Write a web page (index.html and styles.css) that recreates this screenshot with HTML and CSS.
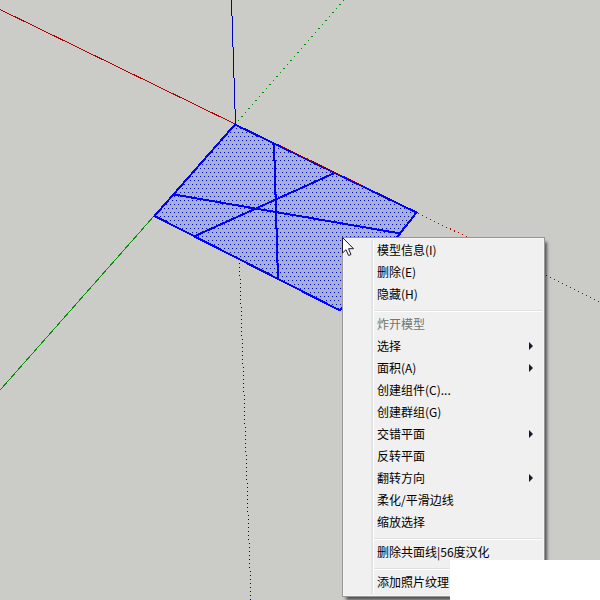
FILE: index.html
```html
<!DOCTYPE html>
<html lang="zh-CN">
<head>
<meta charset="utf-8">
<title>模型</title>
<link rel="stylesheet" href="styles.css">
</head>
<body>
<main class="viewport">
<svg class="scene" viewBox="0 0 600 600" shape-rendering="crispEdges">
  <defs>
    <pattern id="dots" x="0" y="0" width="8" height="8" patternUnits="userSpaceOnUse">
      <rect width="8" height="8" fill="#a8b4c0"/>
      <path d="M0 0h1v1h-1zM4 0h1v1h-1zM2 4h1v1h-1zM6 4h1v1h-1z" fill="#00f"/>
    </pattern>
  </defs>
  <path class="axis red" d="M0 9.5L235 124"/>
  <path class="axis blue" d="M231.5 0L235.5 124"/>
  <path class="axis green" d="M154 216L0 390.2"/>
  <path class="axis green dotted-green" d="M238.2 120.8L343.8 0"/>
  <path class="axis navy dotted-down" d="M239.5 263L251 600"/>
  <path class="axis red dotted-red" d="M418 213.3L470 238.5"/>
  <path class="axis dark dotted-red" d="M546 275.4L600 301.8"/>
  <path d="M235 124L416 212L340 310L154 216Z" fill="url(#dots)"/>
  <path class="edge" d="M235 124.5L416.5 212.5L340 310.5L154.5 216Z"/>
  <path class="edge" d="M174 194.5L400.5 233.5M334.5 173L195 236M274 143L278 279"/>
  <path class="axis red overlay" d="M282 146.6L364 186.6"/>
</svg>
<nav class="menu">
  <ul class="items">
    <li>模型信息(I)</li>
    <li>删除(E)</li>
    <li>隐藏(H)</li>
    <li class="separator"></li>
    <li class="disabled">炸开模型</li>
    <li class="sub">选择</li>
    <li class="sub">面积(A)</li>
    <li>创建组件(C)...</li>
    <li>创建群组(G)</li>
    <li class="sub">交错平面</li>
    <li>反转平面</li>
    <li class="sub">翻转方向</li>
    <li>柔化/平滑边线</li>
    <li>缩放选择</li>
    <li class="separator"></li>
    <li>删除共面线|56度汉化</li>
    <li class="separator"></li>
    <li>添加照片纹理</li>
  </ul>
</nav>
<div class="cover"></div>
<svg class="cursor" viewBox="0 0 12 20"><path d="M.5.5V16L4 12.7L6.6 18.5L9 17.5L6.5 11.7H11.5Z"/></svg>
</main>
</body>
</html>
```
FILE: styles.css
```css
* { box-sizing: border-box; }
body { margin: 0; }
.viewport { position: relative; width: 600px; height: 600px; overflow: hidden; background: #cbccc7; }
.scene { display: block; width: 600px; height: 600px; }
.axis { fill: none; stroke-width: 1; }
.red { stroke: #b00000; }
.green { stroke: #009000; }
.blue { stroke: #0000b8; }
.navy { stroke: #000070; }
.dark { stroke: #980000; }
.dotted-green { stroke-dasharray: 1 4.315; }
.dotted-down { stroke-dasharray: 1 3; }
.dotted-red { stroke-dasharray: 1 3.455; }
.overlay { stroke-dasharray: 2 2.5; }
.edge { fill: none; stroke: #00f; stroke-width: 2; }
.menu {
  position: absolute; left: 342px; top: 237px; width: 203px; height: 360px;
  padding: 1px 2px; border: 1px solid #979797; background: #f0f0f0;
  box-shadow: inset 0 0 0 1px #f5f5f5, 3px 4px 3px -1px rgba(0, 0, 0, .6);
  font: 12px/22px "Noto Sans CJK SC", sans-serif; color: #000;
}
.items { list-style: none; margin: 0 0 0 27px; padding: 0; height: 352px; }
.items::before { content: ""; position: absolute; left: 28px; top: 2px; bottom: 2px; width: 2px; background: #e2e3e3; border-right: 1px solid #fff; }
.items li { height: 22px; padding-left: 5px; white-space: nowrap; }
.items .disabled { color: #6f7571; }
.items .separator { height: 8px; padding: 0; background: linear-gradient(#e0e0e0 0 1px, #fff 1px 2px) 1px 5px / 169px 2px no-repeat; }
.sub { display: flex; align-items: center; justify-content: space-between; }
.sub::after { content: ""; margin-right: 9px; border-left: 4px solid #201428; border-top: 4px solid transparent; border-bottom: 4px solid transparent; }
.cover { position: absolute; left: 450px; top: 560px; width: 150px; height: 40px; background: #fff; }
.cursor { position: absolute; left: 342px; top: 237px; width: 12px; height: 20px; fill: #fff; stroke: #20182a; stroke-width: 1; }
```
